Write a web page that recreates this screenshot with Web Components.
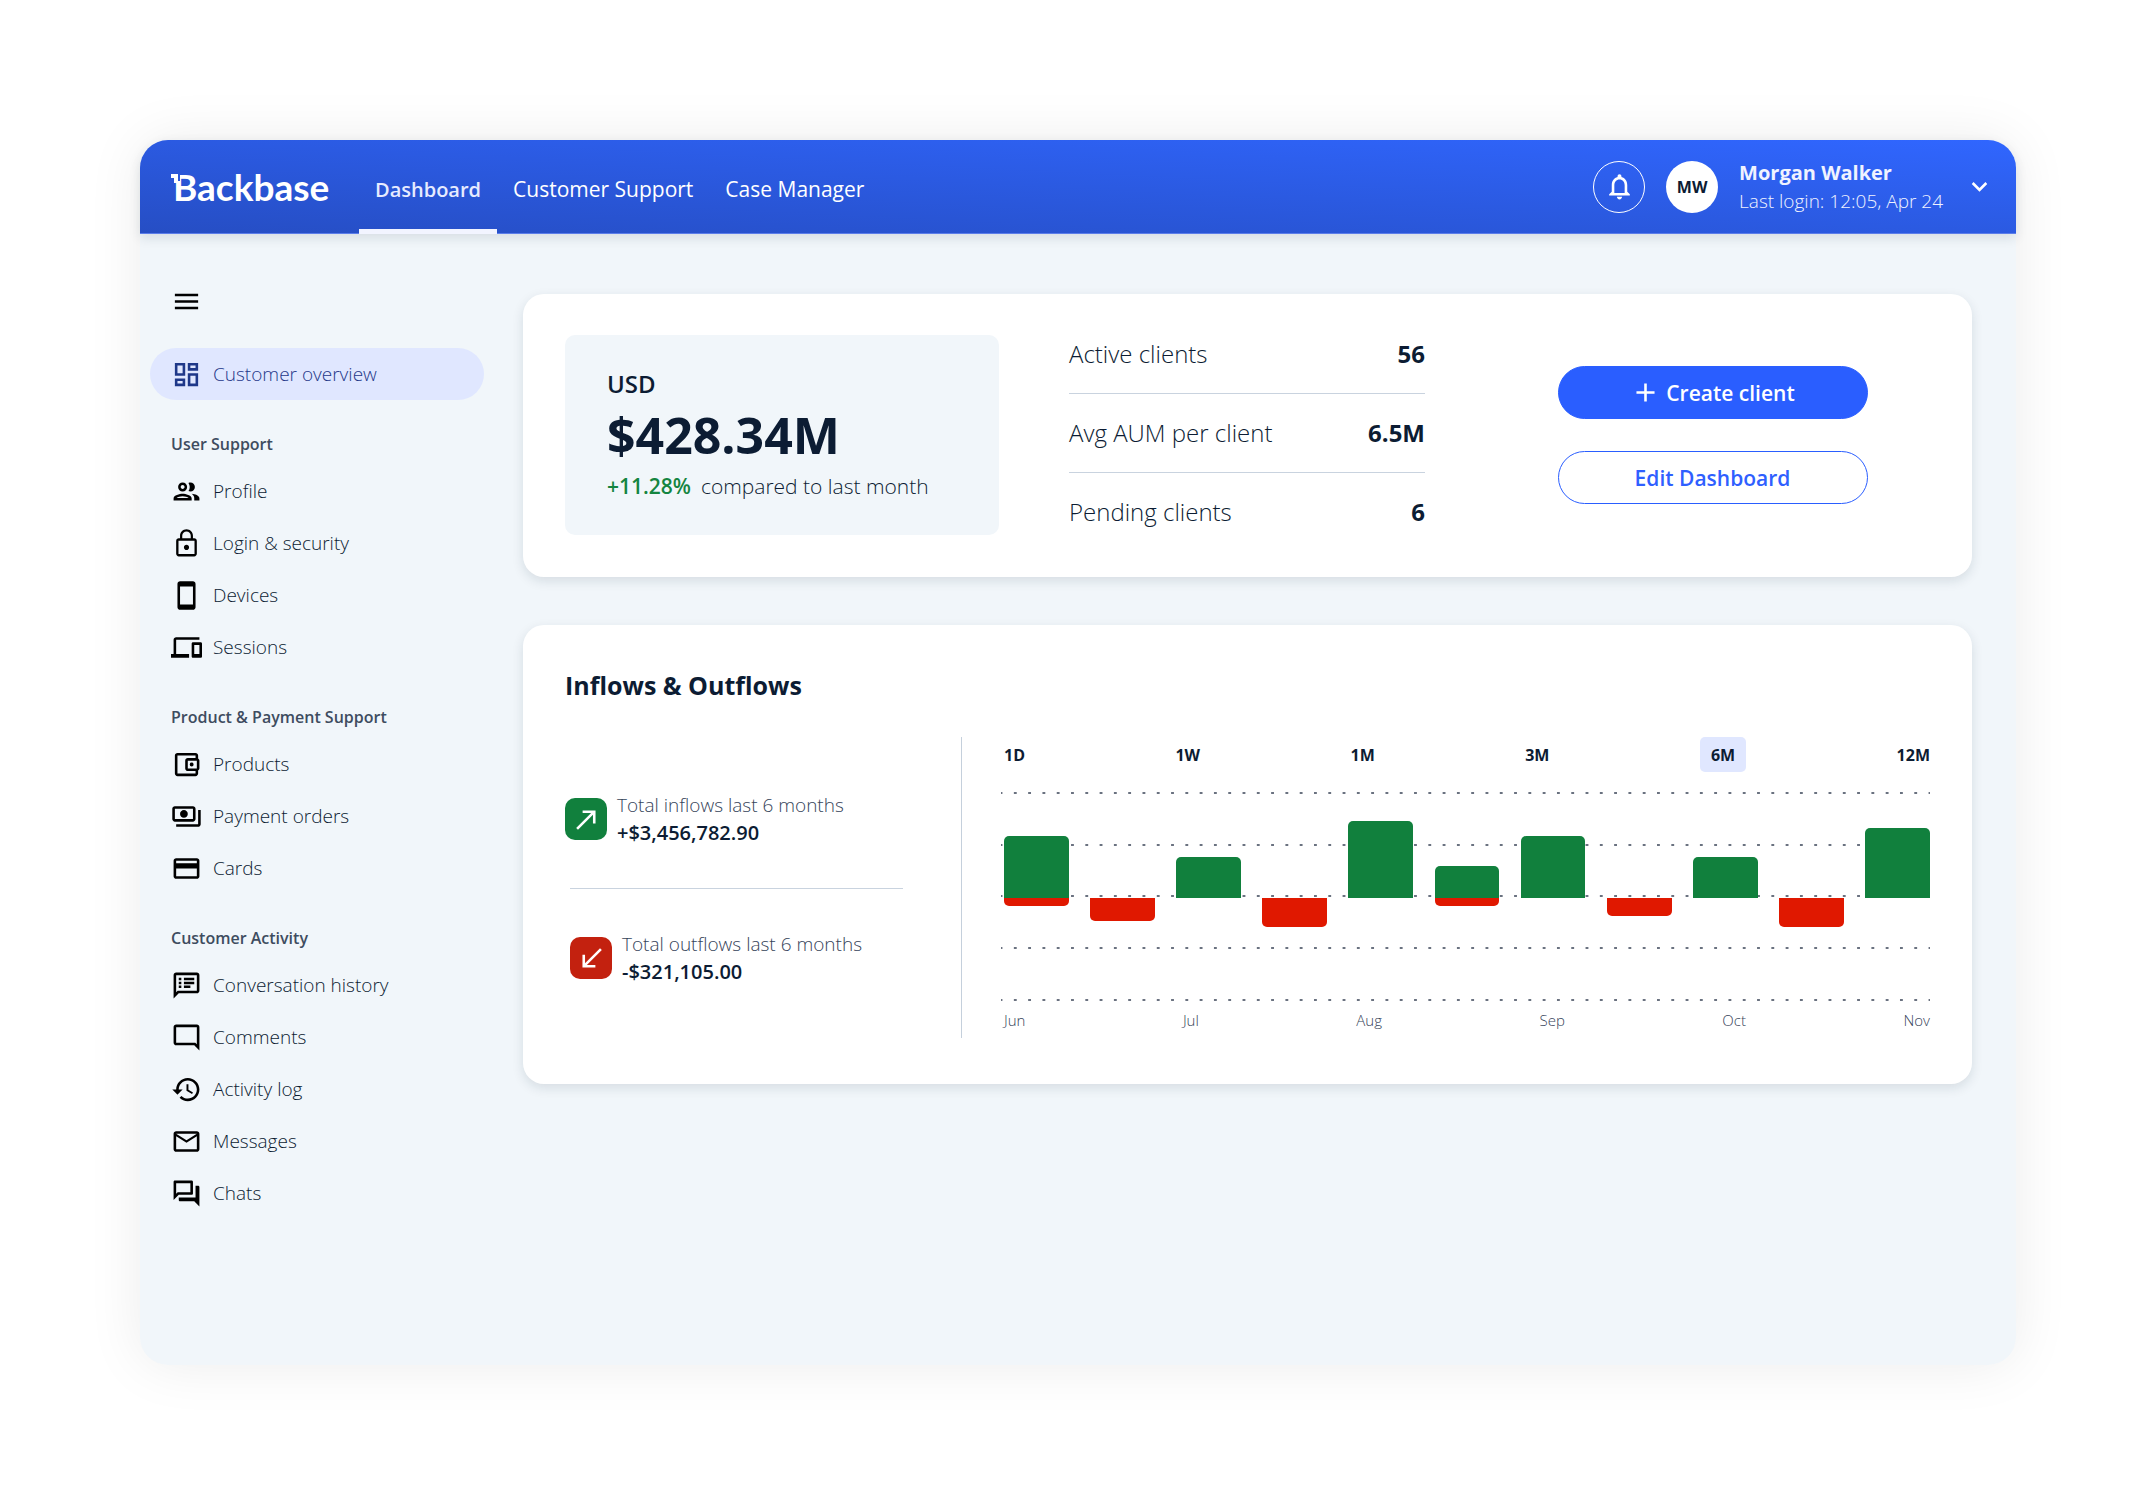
<!DOCTYPE html>
<html lang="en">
<head>
<meta charset="utf-8">
<meta name="viewport" content="width=device-width, initial-scale=1">
<title>Backbase - Dashboard</title>
<style>
  body {
    margin: 0;
    background: #fff;
    color: #0c1c33;
    font-family: "Open Sans", "Noto Sans", sans-serif;
    font-size: 21px;
    font-weight: 300;
  }
</style>
</head>
<body>
<app-shell>
  <top-bar slot="header">
    <nav-tab active>Dashboard</nav-tab>
    <nav-tab>Customer Support</nav-tab>
    <nav-tab>Case Manager</nav-tab>
    <user-menu slot="user" initials="MW">
      <span slot="name">Morgan Walker</span>
      <span slot="login">Last login: 12:05, Apr 24</span>
    </user-menu>
  </top-bar>

  <side-nav slot="sidebar">
    <nav-item icon="dashboard" active>Customer overview</nav-item>
    <nav-group heading="User Support">
      <nav-item icon="group">Profile</nav-item>
      <nav-item icon="lock">Login &amp; security</nav-item>
      <nav-item icon="phone">Devices</nav-item>
      <nav-item icon="devices">Sessions</nav-item>
    </nav-group>
    <nav-group heading="Product &amp; Payment Support">
      <nav-item icon="wallet">Products</nav-item>
      <nav-item icon="payments">Payment orders</nav-item>
      <nav-item icon="card">Cards</nav-item>
    </nav-group>
    <nav-group heading="Customer Activity">
      <nav-item icon="notes">Conversation history</nav-item>
      <nav-item icon="comment">Comments</nav-item>
      <nav-item icon="history">Activity log</nav-item>
      <nav-item icon="mail">Messages</nav-item>
      <nav-item icon="forum">Chats</nav-item>
    </nav-group>
  </side-nav>

  <client-summary>
    <aum-panel slot="aum">
      <span slot="currency">USD</span>
      <span slot="amount">$428.34M</span>
      <span slot="change">+11.28%</span>
      <span slot="note">compared to last month</span>
    </aum-panel>
    <stat-row slot="stats" label="Active clients">56</stat-row>
    <stat-row slot="stats" label="Avg AUM per client">6.5M</stat-row>
    <stat-row slot="stats" label="Pending clients">6</stat-row>
    <pill-button slot="actions" icon="add" primary>Create client</pill-button>
    <pill-button slot="actions">Edit Dashboard</pill-button>
  </client-summary>

  <flows-card heading="Inflows &amp; Outflows">
    <flow-total slot="inflow" icon="up" label="Total inflows last 6 months">+$3,456,782.90</flow-total>
    <flow-total slot="outflow" icon="down" label="Total outflows last 6 months">-$321,105.00</flow-total>
    <flow-chart slot="chart"></flow-chart>
  </flows-card>
</app-shell>

<script>
const ICONS = {
  menu: "M3 18h18v-2H3v2zm0-5h18v-2H3v2zm0-7v2h18V6H3z",
  dashboard: "M19 5v2h-4V5h4M9 5v6H5V5h4m10 8v6h-4v-6h4M9 17v2H5v-2h4M21 3h-8v6h8V3zM11 3H3v10h8V3zm10 8h-8v10h8V11zm-10 4H3v6h8v-6z",
  group: "M9 13.75c-2.34 0-7 1.17-7 3.5V19h14v-1.75c0-2.33-4.66-3.5-7-3.5zM4.34 17c.84-.58 2.87-1.25 4.66-1.25s3.82.67 4.66 1.25H4.34zM9 12c1.93 0 3.5-1.57 3.5-3.5S10.93 5 9 5 5.5 6.57 5.5 8.5 7.07 12 9 12zm0-5c.83 0 1.5.67 1.5 1.5S9.83 10 9 10s-1.5-.67-1.5-1.5S8.17 7 9 7zm7.04 6.81c1.16.84 1.96 1.96 1.96 3.44V19h4v-1.75c0-2.02-3.5-3.17-5.96-3.44zM15 12c1.93 0 3.5-1.57 3.5-3.5S16.93 5 15 5c-.54 0-1.04.13-1.5.35.63.89 1 1.98 1 3.15s-.37 2.26-1 3.15c.46.22.96.35 1.5.35z",
  lock: "M12 17c1.1 0 2-.9 2-2s-.9-2-2-2-2 .9-2 2 .9 2 2 2zm6-9h-1V6c0-2.76-2.24-5-5-5S7 3.24 7 6v2H6c-1.1 0-2 .9-2 2v10c0 1.1.9 2 2 2h12c1.1 0 2-.9 2-2V10c0-1.1-.9-2-2-2zM8.7 6c0-1.82 1.48-3.3 3.3-3.3s3.3 1.48 3.3 3.3v2H8.7V6zM18.2 20.2H5.8V9.8h12.4v10.4z",
  phone: "M17 1H7c-1.1 0-2 .9-2 2v18c0 1.1.9 2 2 2h10c1.1 0 2-.9 2-2V3c0-1.1-.9-2-2-2zm0 18H7V5h10v14z",
  devices: "M4 6h18V4H4c-1.1 0-2 .9-2 2v11H0v3h14v-3H4V6zm19 2h-6c-.55 0-1 .45-1 1v10c0 .55.45 1 1 1h6c.55 0 1-.45 1-1V9c0-.55-.45-1-1-1zm-1 9h-4v-7h4v7z",
  wallet: "M21 7.28V5c0-1.1-.9-2-2-2H5c-1.11 0-2 .9-2 2v14c0 1.1.89 2 2 2h14c1.1 0 2-.9 2-2v-2.28c.59-.35 1-.98 1-1.72V9c0-.74-.41-1.37-1-1.72zM20 9v6h-7V9h7zM5 19V5h14v2h-6c-1.1 0-2 .9-2 2v6c0 1.1.9 2 2 2h6v2H5zM16 10.5a1.5 1.5 0 1 0 0 3 1.5 1.5 0 0 0 0-3z",
  payments: "M19 14V6c0-1.1-.9-2-2-2H3c-1.1 0-2 .9-2 2v8c0 1.1.9 2 2 2h14c1.1 0 2-.9 2-2zm-2 0H3V6h14v8zm-7-7c-1.66 0-3 1.34-3 3s1.34 3 3 3 3-1.34 3-3-1.34-3-3-3zm13 0v11c0 1.1-.9 2-2 2H4v-2h17V7h2z",
  card: "M20 4H4c-1.11 0-1.99.89-1.99 2L2 18c0 1.11.89 2 2 2h16c1.11 0 2-.89 2-2V6c0-1.11-.89-2-2-2zm0 14H4v-6h16v6zm0-10H4V6h16v2z",
  notes: "M20 2H4c-1.1 0-1.99.9-1.99 2L2 22l4-4h14c1.1 0 2-.9 2-2V4c0-1.1-.9-2-2-2zm0 14H5.17L4 17.17V4h16v12zM6 12h2v2H6zm0-3h2v2H6zm0-3h2v2H6zm4 6h5v2h-5zm0-3h8v2h-8zm0-3h8v2h-8z",
  comment: "M20 17.17L18.83 16H4V4h16v13.17zM20 2H4c-1.1 0-2 .9-2 2v12c0 1.1.9 2 2 2h14l4 4V4c0-1.1-.9-2-2-2z",
  history: "M13 3c-4.97 0-9 4.03-9 9H1l3.89 3.89.07.14L9 12H6c0-3.87 3.13-7 7-7s7 3.13 7 7-3.13 7-7 7c-1.93 0-3.68-.79-4.94-2.06l-1.42 1.42C8.27 19.99 10.51 21 13 21c4.97 0 9-4.03 9-9s-4.03-9-9-9zm-1 5v5l4.28 2.54.72-1.21-3.5-2.08V8H12z",
  mail: "M22 6c0-1.1-.9-2-2-2H4c-1.1 0-2 .9-2 2v12c0 1.1.9 2 2 2h16c1.1 0 2-.9 2-2V6zm-2 0l-8 5-8-5h16zm0 12H4V8l8 5 8-5v10z",
  forum: "M15 4v7H5.17L4 12.17V4h11m1-2H3c-.55 0-1 .45-1 1v14l4-4h10c.55 0 1-.45 1-1V3c0-.55-.45-1-1-1zm5 4h-2v9H6v2c0 .55.45 1 1 1h11l4 4V7c0-.55-.45-1-1-1z",
  bell: "M12 22c1.1 0 2-.9 2-2h-4c0 1.1.9 2 2 2zm6-6v-5c0-3.07-1.63-5.64-4.5-6.32V4c0-.83-.67-1.5-1.5-1.5s-1.5.67-1.5 1.5v.68C7.64 5.36 6 7.92 6 11v5l-2 2v1h16v-1l-2-2zm-2 1H8v-6c0-2.48 1.51-4.5 4-4.5s4 2.02 4 4.5v6z",
  chevron: "M16.59 8.59L12 13.17 7.41 8.59 6 10l6 6 6-6z",
  add: "M19 13h-6v6h-2v-6H5v-2h6V5h2v6h6v2z",
  up: "M9 5v2h6.59L4 18.59 5.41 20 17 8.41V15h2V5z",
  down: "M20 5.41L18.59 4 7 15.59V9H5v10h10v-2H8.41z"
};

class UiIcon extends HTMLElement {
  constructor() {
    super();
    this.attachShadow({ mode: "open" });
  }

  connectedCallback() {
    this.shadowRoot.innerHTML = `
      <style>
        :host { display: block; flex: none; width: 31px; height: 31px; }
        svg { display: block; width: 100%; height: 100%; fill: currentColor; }
      </style>
      <svg viewBox="0 0 24 24" aria-hidden="true"><path d="${ICONS[this.getAttribute("name")]}"/></svg>
    `;
  }
}

class AppShell extends HTMLElement {
  constructor() {
    super();
    this.attachShadow({ mode: "open" }).innerHTML = `
      <style>
        :host { display: flex; box-sizing: border-box; min-height: 100vh; padding: 140px; }
        .window {
          flex: 1;
          display: flex;
          flex-direction: column;
          min-width: 0;
          background: #f1f6fa;
          border-radius: 28px;
          box-shadow: 0 0 56px rgba(0, 0, 0, 0.08);
        }
        .body { flex: 1; display: flex; }
        main {
          flex: 1;
          display: flex;
          flex-direction: column;
          gap: 48px;
          min-width: 0;
          padding: 60px 44px 60px 39px;
        }
      </style>
      <div class="window">
        <slot name="header"></slot>
        <div class="body">
          <slot name="sidebar"></slot>
          <main><slot></slot></main>
        </div>
      </div>
    `;
  }
}

class TopBar extends HTMLElement {
  constructor() {
    super();
    this.attachShadow({ mode: "open" }).innerHTML = `
      <style>
        :host { display: block; }
        header {
          display: flex;
          align-items: stretch;
          height: 94px;
          box-sizing: border-box;
          padding: 0 21px 0 31px;
          color: #fff;
          background: linear-gradient(to top right, #264ec4, #3066ff);
          border-bottom: 1px solid #5b7dea;
          border-radius: 28px 28px 0 0;
          box-shadow: 0 4px 12px rgba(20, 40, 60, 0.12);
        }
        .logo {
          position: relative;
          align-self: center;
          width: 156px;
          margin-right: 30px;
          padding-left: 2px;
          color: #fff;
          font: 700 37px/52px Lato, sans-serif;
          text-decoration: none;
        }
        .logo svg { position: absolute; left: 0; top: 13px; width: 9px; height: 9px; }
        nav { display: flex; flex: 1; }
      </style>
      <header>
        <a class="logo" href="#">Backbase<svg viewBox="0 0 9 9" aria-hidden="true">
          <path d="M0 0h7v9H3V4H0z" fill="#fff"/>
          <path d="M7 0h2v7H7z" fill="#2a57da"/>
        </svg></a>
        <nav aria-label="Main"><slot></slot></nav>
        <slot name="user"></slot>
      </header>
    `;
  }
}

class NavTab extends HTMLElement {
  constructor() {
    super();
    this.attachShadow({ mode: "open" }).innerHTML = `
      <style>
        :host { display: flex; margin-bottom: -1px; }
        a {
          display: flex;
          align-items: center;
          padding: 9px 16px 0;
          border-bottom: 5px solid transparent;
          color: #fff;
          font-weight: 400;
          white-space: nowrap;
          text-decoration: none;
        }
        :host([active]) a { border-color: #f2f4ff; color: #e6ebff; font-size: 20px; font-weight: 600; }
      </style>
      <a href="#"><slot></slot></a>
    `;
  }
}

class UserMenu extends HTMLElement {
  constructor() {
    super();
    this.attachShadow({ mode: "open" }).innerHTML = `
      <style>
        :host { display: flex; align-items: center; gap: 21px; }
        button {
          display: grid;
          place-items: center;
          padding: 0;
          border: 0;
          background: none;
          color: #fff;
          cursor: pointer;
        }
        .bell { width: 52px; height: 52px; border: 1px solid #fff; border-radius: 50%; }
        .avatar {
          display: grid;
          place-items: center;
          width: 52px;
          height: 52px;
          border-radius: 50%;
          background: #fff;
          color: #0c1c33;
          font-size: 16px;
          font-weight: 700;
        }
        .who { line-height: 28px; color: #f0f3ff; white-space: nowrap; }
        .name { font-size: 20px; font-weight: 700; }
        .login { font-size: 19px; }
      </style>
      <button class="bell" type="button" aria-label="Notifications"><ui-icon name="bell"></ui-icon></button>
      <span class="avatar"></span>
      <div class="who">
        <div class="name"><slot name="name"></slot></div>
        <div class="login"><slot name="login"></slot></div>
      </div>
      <button type="button" aria-label="Open account menu"><ui-icon name="chevron"></ui-icon></button>
    `;
  }

  connectedCallback() {
    this.shadowRoot.querySelector(".avatar").textContent = this.getAttribute("initials");
  }
}

class SideNav extends HTMLElement {
  constructor() {
    super();
    this.attachShadow({ mode: "open" }).innerHTML = `
      <style>
        :host { display: block; flex: none; width: 334px; padding: 52px 0 60px 10px; }
        button {
          display: block;
          margin: 0 0 31px 21px;
          padding: 0;
          border: 0;
          background: none;
          color: #000;
          cursor: pointer;
        }
      </style>
      <button type="button" aria-label="Toggle menu"><ui-icon name="menu"></ui-icon></button>
      <nav aria-label="Sections"><slot></slot></nav>
    `;
  }
}

class NavGroup extends HTMLElement {
  constructor() {
    super();
    this.attachShadow({ mode: "open" }).innerHTML = `
      <style>
        :host { display: block; }
        h2 {
          margin: 34px 0 11px 21px;
          color: #3e4c5f;
          font-size: 16px;
          font-weight: 600;
          line-height: 20px;
        }
      </style>
      <h2></h2>
      <slot></slot>
    `;
  }

  connectedCallback() {
    this.shadowRoot.querySelector("h2").textContent = this.getAttribute("heading");
  }
}

class NavItem extends HTMLElement {
  constructor() {
    super();
    this.attachShadow({ mode: "open" });
  }

  connectedCallback() {
    this.shadowRoot.innerHTML = `
      <style>
        :host { display: block; }
        a {
          display: flex;
          align-items: center;
          gap: 11px;
          height: 52px;
          padding: 0 21px;
          border-radius: 26px;
          color: #0c1c33;
          font-size: 19px;
          text-decoration: none;
        }
        ui-icon { color: #000; }
        :host([active]) a { background: #e0e7ff; }
        :host([active]) a, :host([active]) ui-icon { color: #1f3889; }
      </style>
      <a href="#"><ui-icon name="${this.getAttribute("icon")}"></ui-icon><slot></slot></a>
    `;
  }
}

class ClientSummary extends HTMLElement {
  constructor() {
    super();
    this.attachShadow({ mode: "open" }).innerHTML = `
      <style>
        :host {
          display: grid;
          grid-template-columns: 434fr 356fr 435fr;
          gap: 70px;
          padding: 41px 42px 42px;
          background: #fff;
          border-radius: 21px;
          box-shadow: 0 4px 12px rgba(20, 40, 60, 0.12);
        }
        .actions {
          display: flex;
          flex-direction: column;
          align-items: center;
          justify-content: center;
          gap: 32px;
        }
      </style>
      <slot name="aum"></slot>
      <div><slot name="stats"></slot></div>
      <div class="actions"><slot name="actions"></slot></div>
    `;
  }
}

class AumPanel extends HTMLElement {
  constructor() {
    super();
    this.attachShadow({ mode: "open" }).innerHTML = `
      <style>
        :host {
          display: flex;
          flex-direction: column;
          justify-content: center;
          gap: 5px;
          min-height: 200px;
          padding: 0 42px;
          border-radius: 10px;
          background: #f1f6fa;
          line-height: 32px;
          white-space: nowrap;
        }
        .currency { font-size: 24px; font-weight: 600; }
        .amount { font-size: 50px; font-weight: 700; line-height: 60px; }
        .trend { display: flex; gap: 10px; }
        .change { color: #148540; font-weight: 600; }
      </style>
      <div class="currency"><slot name="currency"></slot></div>
      <div class="amount"><slot name="amount"></slot></div>
      <div class="trend">
        <span class="change"><slot name="change"></slot></span>
        <slot name="note"></slot>
      </div>
    `;
  }
}

class StatRow extends HTMLElement {
  constructor() {
    super();
    this.attachShadow({ mode: "open" }).innerHTML = `
      <style>
        :host {
          display: flex;
          justify-content: space-between;
          padding: 20px 0;
          border-bottom: 1px solid #c9d3df;
          font-size: 24px;
          line-height: 38px;
        }
        :host(:first-of-type) { padding-top: 0; }
        :host(:last-of-type) { padding-bottom: 0; border: 0; }
        b { font-weight: 700; }
      </style>
      <span></span>
      <b><slot></slot></b>
    `;
  }

  connectedCallback() {
    this.shadowRoot.querySelector("span").textContent = this.getAttribute("label");
  }
}

class PillButton extends HTMLElement {
  constructor() {
    super();
    this.attachShadow({ mode: "open" });
  }

  connectedCallback() {
    const icon = this.hasAttribute("icon") ? `<ui-icon name="${this.getAttribute("icon")}"></ui-icon>` : "";
    this.shadowRoot.innerHTML = `
      <style>
        :host { display: block; width: 310px; }
        button {
          display: flex;
          align-items: center;
          justify-content: center;
          gap: 5px;
          width: 100%;
          height: 53px;
          border: 1px solid #2a5eff;
          border-radius: 27px;
          background: #fff;
          color: #2f5fff;
          font: inherit;
          font-weight: 600;
          cursor: pointer;
        }
        :host([primary]) button { background: #2a5eff; color: #fff; }
      </style>
      <button type="button">${icon}<slot></slot></button>
    `;
  }
}

class FlowsCard extends HTMLElement {
  constructor() {
    super();
    this.attachShadow({ mode: "open" }).innerHTML = `
      <style>
        :host {
          display: block;
          padding: 42px 42px 46px;
          background: #fff;
          border-radius: 21px;
          box-shadow: 0 4px 12px rgba(20, 40, 60, 0.12);
        }
        h1 { margin: 0 0 34px; font-size: 25px; font-weight: 700; line-height: 36px; }
        .columns { display: grid; grid-template-columns: 397fr 968fr; }
        .totals {
          display: flex;
          flex-direction: column;
          justify-content: center;
          padding: 2px 58px 0 0;
          border-right: 1px solid #c5d0dc;
        }
        .outflow { margin: 48px 0 0 5px; padding-top: 48px; border-top: 1px solid #c9d3df; }
      </style>
      <h1></h1>
      <div class="columns">
        <div class="totals">
          <slot name="inflow"></slot>
          <div class="outflow"><slot name="outflow"></slot></div>
        </div>
        <slot name="chart"></slot>
      </div>
    `;
  }

  connectedCallback() {
    this.shadowRoot.querySelector("h1").textContent = this.getAttribute("heading");
  }
}

class FlowTotal extends HTMLElement {
  constructor() {
    super();
    this.attachShadow({ mode: "open" });
  }

  connectedCallback() {
    this.shadowRoot.innerHTML = `
      <style>
        :host { display: flex; align-items: center; gap: 10px; height: 42px; }
        .tile {
          display: grid;
          place-items: center;
          width: 42px;
          height: 42px;
          border-radius: 10px;
          background: #11803d;
          color: #fff;
        }
        :host([icon="down"]) .tile { background: #c3210f; }
        .text { line-height: 27px; white-space: nowrap; }
        .label { color: #36445a; font-size: 19px; }
        .value { font-size: 20px; font-weight: 600; }
      </style>
      <span class="tile"><ui-icon name="${this.getAttribute("icon")}"></ui-icon></span>
      <div class="text">
        <div class="label">${this.getAttribute("label")}</div>
        <div class="value"><slot></slot></div>
      </div>
    `;
  }
}

// [inflow, outflow] heights of every half-month bar
const FLOWS = [
  [62, 8], [0, 23], [41, 0], [0, 29], [77, 0], [32, 8],
  [62, 0], [0, 18], [41, 0], [0, 29], [70, 0]
];
const RANGES = ["1D", "1W", "1M", "3M", "6M", "12M"];
const MONTHS = ["Jun", "Jul", "Aug", "Sep", "Oct", "Nov"];

class FlowChart extends HTMLElement {
  constructor() {
    super();
    this.attachShadow({ mode: "open" }).innerHTML = `
      <style>
        :host { display: block; padding: 0 0 8px 39px; }
        .ranges, .bars, .months { display: flex; justify-content: space-between; padding-left: 3px; }
        .ranges { height: 35px; margin-bottom: 20px; }
        .ranges button {
          padding: 0;
          border: 0;
          border-radius: 5px;
          background: none;
          color: #0c1c33;
          font: inherit;
          font-size: 16px;
          font-weight: 700;
          cursor: pointer;
        }
        .ranges button[aria-pressed="true"] { padding: 0 11px; background: #e0e7ff; }
        .plot { display: grid; }
        .plot > * { grid-area: 1 / 1; }
        svg { width: 100%; height: 209px; }
        line {
          stroke: #6a7280;
          stroke-width: 2;
          stroke-dasharray: 2 8;
          stroke-dashoffset: 1;
        }
        .bar { display: grid; grid-template-rows: 106px 103px; width: 7%; max-width: 66px; }
        .in { align-self: end; border-radius: 5px 5px 0 0; background: #11803d; }
        .out { align-self: start; border-radius: 0 0 5px 5px; background: #e01800; }
        .months { margin-top: 9px; color: #36445a; font-size: 15px; line-height: 20px; }
      </style>
      <div class="ranges" role="group" aria-label="Period"></div>
      <div class="plot">
        <svg aria-hidden="true"></svg>
        <div class="bars"></div>
      </div>
      <div class="months"></div>
    `;
  }

  connectedCallback() {
    const root = this.shadowRoot;
    root.querySelector(".ranges").innerHTML = RANGES
      .map(r => `<button type="button" aria-pressed="${r === "6M"}">${r}</button>`).join("");
    root.querySelector("svg").innerHTML = [1, 53, 104, 156, 208]
      .map(y => `<line x1="0" x2="100%" y1="${y}" y2="${y}" pathLength="650"/>`).join("");
    root.querySelector(".bars").innerHTML = FLOWS
      .map(([inflow, outflow]) => `<div class="bar"><div class="in" style="height:${inflow}px"></div><div class="out" style="height:${outflow}px"></div></div>`).join("");
    root.querySelector(".months").innerHTML = MONTHS.map(m => `<span>${m}</span>`).join("");
  }
}

customElements.define("ui-icon", UiIcon);
customElements.define("app-shell", AppShell);
customElements.define("top-bar", TopBar);
customElements.define("nav-tab", NavTab);
customElements.define("user-menu", UserMenu);
customElements.define("side-nav", SideNav);
customElements.define("nav-group", NavGroup);
customElements.define("nav-item", NavItem);
customElements.define("client-summary", ClientSummary);
customElements.define("aum-panel", AumPanel);
customElements.define("stat-row", StatRow);
customElements.define("pill-button", PillButton);
customElements.define("flows-card", FlowsCard);
customElements.define("flow-total", FlowTotal);
customElements.define("flow-chart", FlowChart);
</script>
</body>
</html>
